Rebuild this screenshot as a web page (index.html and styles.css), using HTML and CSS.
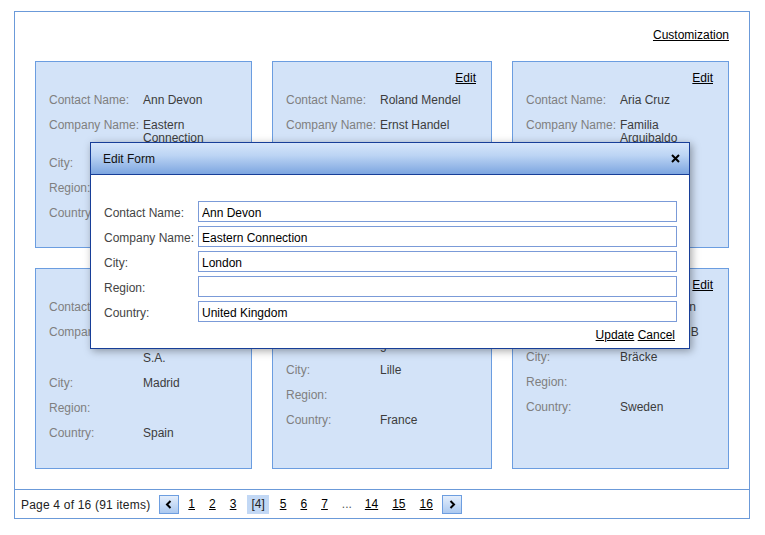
FILE: index.html
```html
<!DOCTYPE html>
<html>
<head>
<meta charset="utf-8">
<title>Card View</title>
<link rel="stylesheet" href="styles.css">
</head>
<body>
<div class="frame">
  <div class="topbar"><a href="#" class="link">Customization</a></div>
  <div class="cards">
    <div class="card">
      <div class="edit"></div>
      <div class="fields">
        <span class="lbl">Contact Name:</span><span class="val">Ann Devon</span>
        <span class="lbl">Company Name:</span><span class="val">Eastern Connection</span>
        <span class="lbl">City:</span><span class="val">London</span>
        <span class="lbl">Region:</span><span class="val"></span>
        <span class="lbl">Country:</span><span class="val">UK</span>
      </div>
    </div>
    <div class="card">
      <div class="edit"><a href="#" class="link">Edit</a></div>
      <div class="fields">
        <span class="lbl">Contact Name:</span><span class="val">Roland Mendel</span>
        <span class="lbl">Company Name:</span><span class="val">Ernst Handel</span>
        <span class="lbl">City:</span><span class="val">Graz</span>
        <span class="lbl">Region:</span><span class="val"></span>
        <span class="lbl">Country:</span><span class="val">Austria</span>
      </div>
    </div>
    <div class="card">
      <div class="edit"><a href="#" class="link">Edit</a></div>
      <div class="fields">
        <span class="lbl">Contact Name:</span><span class="val">Aria Cruz</span>
        <span class="lbl">Company Name:</span><span class="val">Familia Arquibaldo</span>
        <span class="lbl">City:</span><span class="val">Sao Paulo</span>
        <span class="lbl">Region:</span><span class="val">SP</span>
        <span class="lbl">Country:</span><span class="val">Brazil</span>
      </div>
    </div>
    <div class="card">
      <div class="edit"><a href="#" class="link">Edit</a></div>
      <div class="fields">
        <span class="lbl">Contact Name:</span><span class="val">Diego Roel</span>
        <span class="lbl">Company Name:</span><span class="val">FISSA Fabrica Inter. Salchichas S.A.</span>
        <span class="lbl">City:</span><span class="val">Madrid</span>
        <span class="lbl">Region:</span><span class="val"></span>
        <span class="lbl">Country:</span><span class="val">Spain</span>
      </div>
    </div>
    <div class="card">
      <div class="edit"><a href="#" class="link">Edit</a></div>
      <div class="fields">
        <span class="lbl">Contact Name:</span><span class="val">Martine Rancé</span>
        <span class="lbl">Company Name:</span><span class="val">Folies gourmandes</span>
        <span class="lbl">City:</span><span class="val">Lille</span>
        <span class="lbl">Region:</span><span class="val"></span>
        <span class="lbl">Country:</span><span class="val">France</span>
      </div>
    </div>
    <div class="card">
      <div class="edit"><a href="#" class="link">Edit</a></div>
      <div class="fields">
        <span class="lbl">Contact Name:</span><span class="val">Maria Larsson</span>
        <span class="lbl">Company Name:</span><span class="val">Folk och fä HB</span>
        <span class="lbl">City:</span><span class="val">Bräcke</span>
        <span class="lbl">Region:</span><span class="val"></span>
        <span class="lbl">Country:</span><span class="val">Sweden</span>
      </div>
    </div>
  </div>
  <div class="pager">
    <span class="summary">Page 4 of 16 (91 items)</span>
    <span class="btn prev"><svg width="8" height="9" viewBox="0 0 8 9"><polyline points="5.5,1 2,4.5 5.5,8" fill="none" stroke="#000" stroke-width="2"/></svg></span>
    <a href="#" class="pg">1</a>
    <a href="#" class="pg">2</a>
    <a href="#" class="pg">3</a>
    <span class="pg cur">[4]</span>
    <a href="#" class="pg">5</a>
    <a href="#" class="pg">6</a>
    <a href="#" class="pg">7</a>
    <span class="pg dots">...</span>
    <a href="#" class="pg">14</a>
    <a href="#" class="pg">15</a>
    <a href="#" class="pg">16</a>
    <span class="btn next"><svg width="8" height="9" viewBox="0 0 8 9"><polyline points="2.5,1 6,4.5 2.5,8" fill="none" stroke="#000" stroke-width="2"/></svg></span>
  </div>
</div>

<div class="popup">
  <div class="popup-head">
    <span class="popup-title">Edit Form</span>
    <svg class="close" width="9" height="9" viewBox="0 0 9 9"><path d="M1 1 L8 8 M8 1 L1 8" stroke="#000" stroke-width="2"/></svg>
  </div>
  <div class="popup-body">
    <div class="form">
      <label class="flbl">Contact Name:</label><input class="inp" type="text" value="Ann Devon">
      <label class="flbl">Company Name:</label><input class="inp" type="text" value="Eastern Connection">
      <label class="flbl">City:</label><input class="inp" type="text" value="London">
      <label class="flbl">Region:</label><input class="inp" type="text" value="">
      <label class="flbl">Country:</label><input class="inp" type="text" value="United Kingdom">
    </div>
    <div class="actions"><a href="#" class="link">Update</a> <a href="#" class="link">Cancel</a></div>
  </div>
</div>
</body>
</html>
```

FILE: styles.css
```css
html, body {
  margin: 0;
  padding: 0;
  background: #fff;
}
body {
  position: relative;
  font-family: "Liberation Sans", Arial, sans-serif;
  font-size: 12px;
  color: #333;
}
.link {
  color: #000;
  text-decoration: underline;
}
.frame {
  margin: 11px 0 0 14px;
  width: 736px;
  box-sizing: border-box;
  border: 1px solid #6b9ad9;
}
.topbar {
  height: 49px;
  box-sizing: border-box;
  padding: 16px 20px 0 0;
  text-align: right;
  line-height: 14px;
}
.cards {
  display: grid;
  grid-template-columns: 217px 220px 217px;
  grid-template-rows: 187px 201px;
  column-gap: 20px;
  row-gap: 20px;
  padding: 0 20px;
}
.card {
  box-sizing: border-box;
  background: #d3e3f8;
  border: 1px solid #6b9de0;
  padding: 9px 15px 22px 13px;
}
.edit {
  height: 14px;
  line-height: 14px;
  text-align: right;
  margin-bottom: 2px;
}
.fields {
  display: grid;
  grid-template-columns: 94px 1fr;
}
.lbl, .val {
  padding: 7px 0 5px;
  line-height: 13px;
}
.lbl {
  color: #7f7f7f;
}
.val {
  color: #3c3c3c;
}
.pager {
  margin-top: 20px;
  border-top: 1px solid #6b9ad9;
  height: 29px;
  box-sizing: border-box;
  padding-top: 1px;
  display: flex;
  align-items: center;
  padding-left: 6px;
  color: #222;
}
.summary {
  margin-right: 7px;
  letter-spacing: 0.2px;
}
.btn {
  width: 20px;
  height: 19px;
  box-sizing: border-box;
  border: 1px solid #6d9ee0;
  background: linear-gradient(#e4eefc, #abc9f0);
  display: flex;
  align-items: center;
  justify-content: center;
  margin: -1px 2px 0;
}
.pg {
  padding: 0 3px;
  margin: 0 4px;
  line-height: 19px;
  color: #000;
}
.pg.cur {
  padding: 0 4px;
  background: #c2d8f5;
  color: #222;
}
.pg.dots {
  color: #555;
  margin-right: 3px;
}
.pg.next-gap {
  margin-right: 3px;
}
.popup {
  position: absolute;
  left: 90px;
  top: 142px;
  width: 600px;
  box-sizing: border-box;
  border: 1px solid #173e98;
  background: #fff;
  box-shadow: 2px 2px 8px rgba(0, 0, 0, 0.35);
}
.popup-head {
  height: 32px;
  box-sizing: border-box;
  border-bottom: 1px solid #173e98;
  background: linear-gradient(#d6e6fb 0%, #bcd4f4 40%, #7da6e0 100%);
  display: flex;
  align-items: center;
  justify-content: space-between;
  padding: 0 9px 0 12px;
  color: #111;
}
.popup-body {
  padding: 26px 12px 6px 13px;
}
.form {
  display: grid;
  grid-template-columns: 94px 1fr;
  row-gap: 4px;
  align-items: center;
}
.flbl {
  color: #444;
  padding-top: 2px;
}
.inp {
  height: 21px;
  box-sizing: border-box;
  border: 1px solid #7b9bd8;
  padding: 2px 3px 0;
  margin: 0;
  font-family: "Liberation Sans", Arial, sans-serif;
  font-size: 12px;
  color: #000;
  width: 100%;
  outline: none;
}
.actions {
  margin-top: 6px;
  line-height: 14px;
  text-align: right;
  padding-right: 2px;
}
```
